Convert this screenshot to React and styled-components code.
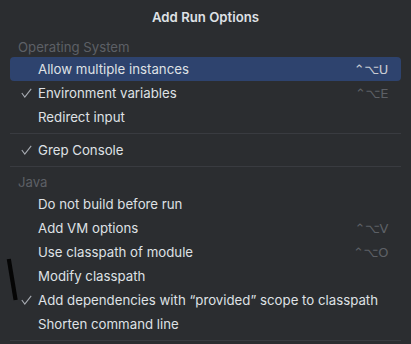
import React from "react";
import styled, { createGlobalStyle } from "styled-components";

const Global = createGlobalStyle`
  html, body { margin: 0; padding: 0; background: #2b2d30; }
  body { font-family: Inter, "Noto Sans", "DejaVu Sans", sans-serif; }
`;

const Popup = styled.div`
  position: relative;
  width: 411px;
  height: 344px;
  background: #2b2d30;
  overflow: hidden;
  box-sizing: border-box;
`;

const Title = styled.div`
  height: 36px;
  display: flex;
  align-items: center;
  justify-content: center;
  padding-bottom: 2px;
  box-sizing: border-box;
  color: #dfe1e5;
  font-size: 13.2px;
  font-weight: 600;
`;

const List = styled.div`
  display: flex;
  flex-direction: column;
  padding: 0 10px;
`;

const Header = styled.div`
  height: 21px;
  display: flex;
  align-items: center;
  padding-left: 8px;
  color: #5d6066;
  font-size: 13.2px;
`;

const Row = styled.div`
  height: 24px;
  display: flex;
  align-items: center;
  border-radius: 4px;
  padding: 0 13px 0 11px;
  background: ${(p) => (p.$selected ? "#2e436e" : "transparent")};
  color: #dfe1e5;
  font-size: 13.25px;
`;

const CheckSlot = styled.span`
  width: 17px;
  display: flex;
  align-items: center;
`;

const Label = styled.span`
  flex: 1;
  white-space: nowrap;
`;

const Shortcut = styled.span`
  font-family: "DejaVu Sans", Inter, sans-serif;
  font-size: 13px;
  letter-spacing: -0.4px;
  color: ${(p) => (p.$selected ? "#c9ccd3" : "#5d6066")};
`;

const Separator = styled.div`
  padding: 4px 0;
  &::after {
    content: "";
    display: block;
    height: 1px;
    background: #393b40;
  }
`;

const Stroke = styled.svg`
  position: absolute;
  left: 4px;
  top: 256px;
`;

const Check = () => (
  <svg width="11" height="10" viewBox="0 0 11 10">
    <path d="M0.8 5 L3.8 9 L10.2 0.8" fill="none" stroke="#a7abb2" strokeWidth="1.1" />
  </svg>
);

const Item = ({ label, checked, shortcut, selected }) => (
  <Row $selected={selected}>
    <CheckSlot>{checked && <Check />}</CheckSlot>
    <Label>{label}</Label>
    {shortcut && <Shortcut $selected={selected}>{shortcut}</Shortcut>}
  </Row>
);

export default function App() {
  return (
    <>
      <Global />
      <Popup>
        <Title>Add Run Options</Title>
        <List>
          <Header>Operating System</Header>
          <Item label="Allow multiple instances" shortcut="⌃⌥U" selected />
          <Item label="Environment variables" shortcut="⌃⌥E" checked />
          <Item label="Redirect input" />
          <Separator />
          <Item label="Grep Console" checked />
          <Separator />
          <Header>Java</Header>
          <Item label="Do not build before run" />
          <Item label="Add VM options" shortcut="⌃⌥V" />
          <Item label="Use classpath of module" shortcut="⌃⌥O" />
          <Item label="Modify classpath" />
          <Item label="Add dependencies with “provided” scope to classpath" checked />
          <Item label="Shorten command line" />
          <Separator />
        </List>
        <Stroke width="16" height="48" viewBox="0 0 16 48">
          <path d="M4.8 3 L11.6 44" stroke="#050505" strokeWidth="4.2" strokeLinecap="butt" />
        </Stroke>
      </Popup>
    </>
  );
}
